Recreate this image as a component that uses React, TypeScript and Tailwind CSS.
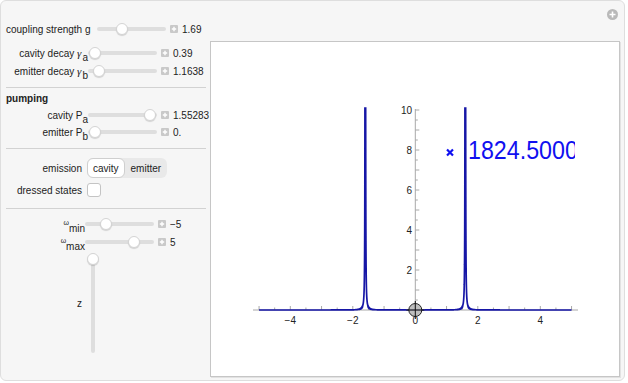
import React from "react";

const FONT = { fontFamily: '"Liberation Sans", Arial, sans-serif' };

function Plus() {
  return (
    <svg width="8" height="8" viewBox="0 0 8 8" className="shrink-0">
      <rect x="0" y="0" width="8" height="8" rx="1" fill="#c9c9c9" />
      <path d="M4 1.8v4.4M1.8 4h4.4" stroke="#fff" strokeWidth="1.4" />
    </svg>
  );
}

// horizontal slider: thumb = centre of knob measured from track start
function Slider({ thumb, width = 69 }: { thumb: number; width?: number }) {
  return (
    <div className="relative h-[14px] shrink-0 flex items-center" style={{ width }}>
      <div className="h-[4px] w-full rounded-full bg-[#dedede]" />
      <div
        className="absolute top-[1px] h-[12px] w-[12px] rounded-full bg-white border border-[#d4d4d4] shadow-[0_1px_1px_rgba(0,0,0,0.15)]"
        style={{ left: thumb - 6 }}
      />
    </div>
  );
}

function Row({
  label,
  labelW,
  left,
  thumb,
  value,
  className = "",
}: {
  label: React.ReactNode;
  labelW: number;
  left?: boolean;
  thumb: number;
  value: string;
  className?: string;
}) {
  return (
    <div className={"flex items-center h-[16px] " + className}>
      <div
        className={"shrink-0 whitespace-nowrap " + (left ? "text-left" : "text-right")}
        style={{ width: labelW }}
      >
        {label}
      </div>
      <Slider thumb={thumb} />
      <div className="ml-[4px]">
        <Plus />
      </div>
      <span className="ml-[4px]">{value}</span>
    </div>
  );
}

const Sep = ({ className = "" }: { className?: string }) => (
  <div className={"h-px w-[200px] bg-[#d2d2d2] " + className} />
);

function Sub({ children }: { children: React.ReactNode }) {
  return <span className="relative top-[4px] text-[10px]">{children}</span>;
}

const Gamma = () => (
  <i className="text-[11px] pr-[1px]" style={{ fontFamily: '"Liberation Serif", serif' }}>
    γ
  </i>
);

// plot coordinates (page pixels)
const X0 = 415.3;
const Y0 = 310;
const SX = 31.25;
const SY = 20;
const px = (x: number) => X0 + x * SX;
const py = (y: number) => Y0 - y * SY;

function buildCurve() {
  const pts: string[] = [];
  const peaks = [-1.6, 1.6];
  const w = 0.0012;
  const h = 1000;
  const f = (x: number) => {
    let y = 0;
    for (const p of peaks) y += (h * w * w) / ((x - p) * (x - p) + w * w);
    return Math.min(y, 10.1);
  };
  let x = -5;
  while (x <= 5.0001) {
    pts.push(`${px(x).toFixed(2)},${py(f(x)).toFixed(2)}`);
    const near = peaks.some((p) => Math.abs(x - p) < 0.25);
    x += near ? 0.0001 : 0.01;
  }
  return "M" + pts.join("L");
}

function Plot() {
  const xt: number[] = [];
  for (let i = -10; i <= 10; i++) xt.push(i / 2);
  const yt: number[] = [];
  for (let i = 1; i <= 20; i++) yt.push(i / 2);
  return (
    <svg width="408" height="334" className="block">
      <defs>
        <clipPath id="pr">
          <rect x="211" y="107" width="368" height="230" />
        </clipPath>
        <clipPath id="tx">
          <rect x="211" y="107" width="364" height="230" />
        </clipPath>
      </defs>
      <g transform="translate(-211 -42)" style={FONT}>
        {/* axes */}
        <line x1="253" y1={Y0} x2="578" y2={Y0} stroke="#a8a8a8" strokeWidth="1" />
        <line x1={X0} y1="109" x2={X0} y2={Y0} stroke="#a8a8a8" strokeWidth="1" />
        {xt.map((t) => (
          <line
            key={"x" + t}
            x1={px(t)}
            x2={px(t)}
            y1={Y0}
            y2={Y0 - (Number.isInteger(t) ? 4 : 2.5)}
            stroke="#a8a8a8"
          />
        ))}
        {yt.map((t) => (
          <line
            key={"y" + t}
            x1={X0}
            x2={X0 + (Number.isInteger(t) ? 4 : 2.5)}
            y1={py(t)}
            y2={py(t)}
            stroke="#a8a8a8"
          />
        ))}
        {[-4, -2, 0, 2, 4].map((t) => (
          <text key={"lx" + t} x={px(t)} y="324" fontSize="10" textAnchor="middle" fill="#222">
            {t < 0 ? "\u2212" + -t : t}
          </text>
        ))}
        {[2, 4, 6, 8, 10].map((t) => (
          <text key={"ly" + t} x="412" y={py(t) + 3.5} fontSize="10" textAnchor="end" fill="#222">
            {t}
          </text>
        ))}
        {/* curve */}
        <path d={buildCurve()} fill="none" stroke="#1616a6" strokeWidth="1.7" clipPath="url(#pr)" />
        {/* marker + label */}
        <path d="M447 149.5l6 6M453 149.5l-6 6" stroke="#1010f0" strokeWidth="2.2" />
        <g clipPath="url(#tx)">
          <text transform="translate(468 159) scale(0.93 1)" x="0" y="0" fontSize="25" fill="#1010f0">
            1824.5000
          </text>
        </g>
        {/* locator */}
        <circle cx={X0} cy={Y0} r="6.5" fill="#b4b4b4" fillOpacity="0.85" stroke="#222" strokeWidth="1" />
        <line x1={X0 - 9} x2={X0 + 9} y1={Y0} y2={Y0} stroke="#111" strokeWidth="1" />
        <line x1={X0} x2={X0} y1={Y0 - 9} y2={Y0 + 9} stroke="#111" strokeWidth="1" />
      </g>
    </svg>
  );
}

export default function App() {
  return (
    <div className="w-[628px] h-[383px] bg-white text-[10px] text-[#222]" style={FONT}>
      <div className="relative flex w-[625px] h-[381px] rounded-md border border-[#dedede] bg-[#f6f6f6]">
        {/* control column */}
        <div className="w-[209px] shrink-0 pl-[5px] flex flex-col">
          <Row className="mt-[20px]" left labelW={91} thumb={25} value="1.69" label="coupling strength g" />
          <Row
            className="mt-[8px]"
            labelW={82}
            thumb={7}
            value="0.39"
            label={
              <>
                cavity decay <Gamma />
                <Sub>a</Sub>
              </>
            }
          />
          <Row
            className="mt-[2px]"
            labelW={82}
            thumb={11}
            value="1.1638"
            label={
              <>
                emitter decay <Gamma />
                <Sub>b</Sub>
              </>
            }
          />
          <Sep className="mt-[8px]" />
          <div className="mt-[4px] h-[14px] leading-[14px] font-bold">pumping</div>
          <Row
            className="mt-[1px]"
            labelW={82}
            thumb={62}
            value="1.55283"
            label={
              <>
                cavity P<Sub>a</Sub>
              </>
            }
          />
          <Row
            className="mt-[1px]"
            labelW={82}
            thumb={7}
            value="0."
            label={
              <>
                emitter P<Sub>b</Sub>
              </>
            }
          />
          <Sep className="mt-[8px]" />
          <div className="mt-[9px] flex items-center h-[20px]">
            <div className="w-[76px] text-right">emission</div>
            <div className="ml-[5px] flex items-center h-[20px] rounded-[6px] bg-[#e9e9e9]">
              <div className="h-[20px] px-[5px] flex items-center rounded-[6px] bg-white border border-[#cfcfcf] text-[10px]">
                cavity
              </div>
              <div className="px-[6px] flex items-center">emitter</div>
            </div>
          </div>
          <div className="mt-[5px] flex items-center h-[14px]">
            <div className="w-[76px] text-right">dressed states</div>
            <div className="ml-[5px] w-[14px] h-[14px] rounded-[3px] bg-white border border-[#c4c4c4]" />
          </div>
          <Sep className="mt-[11px]" />
          <Row
            className="mt-[7px]"
            labelW={79}
            thumb={21}
            value={"\u22125"}
            label={
              <>
                <span className="relative top-[-3px] text-[7px]">ω</span>
                <Sub>min</Sub>
              </>
            }
          />
          <Row
            className="mt-[2px]"
            labelW={79}
            thumb={49}
            value="5"
            label={
              <>
                <span className="relative top-[-3px] text-[7px]">ω</span>
                <Sub>max</Sub>
              </>
            }
          />
          {/* vertical z slider */}
          <div className="mt-[3px] flex h-[100px]">
            <div className="w-[76px] flex items-center justify-end">
              <span>z</span>
            </div>
            <div className="relative ml-[5px] w-[12px] h-[100px] flex justify-center">
              <div className="w-[4px] h-full rounded-full bg-[#dedede]" />
              <div className="absolute top-0 left-0 h-[12px] w-[12px] rounded-full bg-white border border-[#d4d4d4] shadow-[0_1px_1px_rgba(0,0,0,0.15)]" />
            </div>
          </div>
        </div>

        {/* plot */}
        <div className="flex-1 pt-[40px]">
          <div className="w-[410px] h-[336px] border border-[#c6c6c6] bg-white shadow-[1px_1px_0_#e2e2e2]">
            <Plot />
          </div>
        </div>

        <div className="absolute right-[6px] top-[8px]">
          <svg width="11" height="11" viewBox="0 0 11 11">
            <circle cx="5.5" cy="5.5" r="5.5" fill="#b9b9b9" />
            <path d="M5.5 2.5v6M2.5 5.5h6" stroke="#fff" strokeWidth="1.6" />
          </svg>
        </div>
      </div>
    </div>
  );
}
